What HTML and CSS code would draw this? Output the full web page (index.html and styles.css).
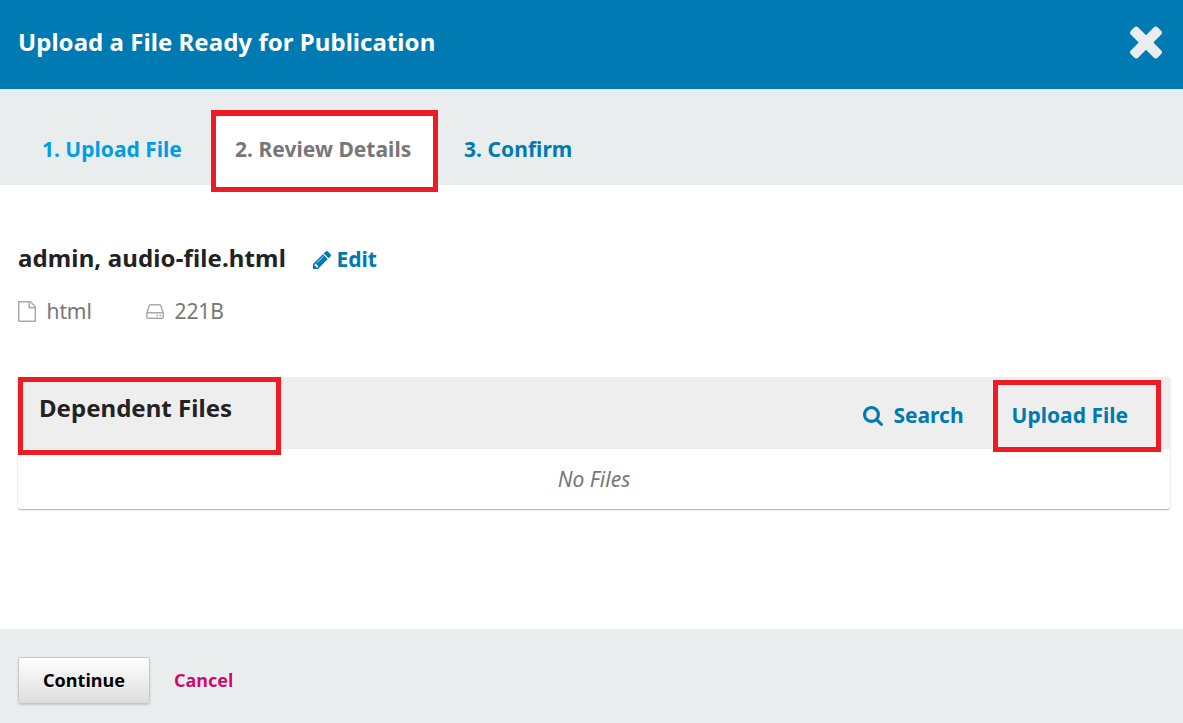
FILE: index.html
```
<!DOCTYPE html>
<html lang="en">
<head>
<meta charset="utf-8">
<title>Upload a File Ready for Publication</title>
<link rel="stylesheet" href="styles.css">
</head>
<body>
<div class="modal">
  <header class="header">
    <h1 class="title">Upload a File Ready for Publication</h1>
    <svg class="close" viewBox="110 366 1188 1188"><path d="M1298 1322q0 40-28 68l-136 136q-28 28-68 28t-68-28l-294-294-294 294q-28 28-68 28t-68-28l-136-136q-28-28-28-68t28-68l294-294-294-294q-28-28-28-68t28-68l136-136q28-28 68-28t68 28l294 294 294-294q28-28 68-28t68 28l136 136q28 28 28 68t-28 68l-294 294 294 294q28 28 28 68z"/></svg>
  </header>
  <nav class="tabs">
    <a class="tab tab-done">1. Upload File</a>
    <a class="tab tab-active">2. Review Details<span class="mark mark-tab"></span></a>
    <a class="tab tab-next">3. Confirm</a>
  </nav>
  <main class="content">
    <div class="file-row">
      <h2 class="file-name">admin, audio-file.html</h2>
      <a class="edit"><svg class="pencil" viewBox="128 149 1515 1515"><path d="M491 1536l91-91-235-235-91 91v107h128v128h107zm523-928q0-22-22-22-10 0-17 7l-542 542q-7 7-7 17 0 22 22 22 10 0 17-7l542-542q7-7 7-17zm-54-192l416 416-832 832h-416v-416zm683 96q0 53-37 90l-166 166-416-416 166-165q36-38 90-38 53 0 91 38l235 234q37 39 37 91z"/></svg>Edit</a>
    </div>
    <div class="meta">
      <span class="meta-type"><svg class="doc" viewBox="128 0 1536 1792"><path d="M1596 380q28 28 48 76t20 88v1152q0 40-28 68t-68 28h-1344q-40 0-68-28t-28-68v-1600q0-40 28-68t68-28h896q40 0 88 20t76 48zm-444-244v376h376q-10-29-22-41l-313-313q-12-12-41-22zm384 1528v-1024h-416q-40 0-68-28t-28-68v-416h-768v1536h1280z"/></svg>html</span>
      <span class="meta-size"><svg class="drive" viewBox="0 0 18 15"><path d="M.8 9.2 3.1 1.9Q3.4.8 4.5.8h9q1.1 0 1.4 1.1l2.3 7.3v4q0 1-1 1H1.8q-1 0-1-1zM.8 8.8h16.4" fill="none" stroke="currentColor" stroke-width="1.5"/><circle cx="11.3" cy="11.5" r=".9"/><circle cx="14.3" cy="11.5" r=".9"/></svg>221B</span>
    </div>
    <section class="panel">
      <div class="panel-head">
        <h3 class="panel-title">Dependent Files</h3>
        <a class="search"><svg class="lens" viewBox="64 128 1664 1664"><path d="M1216 832q0-185-131.5-316.5t-316.5-131.5-316.5 131.5-131.5 316.5 131.5 316.5 316.5 131.5 316.5-131.5 131.5-316.5zm512 832q0 52-38 90t-90 38q-54 0-90-38l-343-342q-179 124-399 124-143 0-273.5-55.5t-225-150-150-225-55.5-273.5 55.5-273.5 150-225 225-150 273.5-55.5 273.5 55.5 225 150 150 225 55.5 273.5q0 220-124 399l343 343q37 37 37 90z"/></svg><span class="search-label">Search</span></a>
        <a class="upload">Upload File</a>
        <span class="mark mark-title"></span>
        <span class="mark mark-upload"></span>
      </div>
      <p class="empty">No Files</p>
    </section>
  </main>
  <footer class="footer">
    <button class="continue">Continue</button>
    <a class="cancel">Cancel</a>
  </footer>
</div>
</body>
</html>
```
FILE: styles.css
```
* { box-sizing: border-box; }
body { margin: 0; background: #fff; font-family: "Noto Sans", sans-serif; }
h1, h2, h3, p { margin: 0; }
svg { fill: currentColor; flex: none; }
.modal { display: flex; flex-direction: column; height: 723px; }
.header { display: flex; justify-content: space-between; height: 89px; padding: 24px 21px 0 18px; background: #007ab2; }
.title { font-size: 24px; line-height: 36px; letter-spacing: .045px; color: #fff; white-space: nowrap; }
.close { width: 32px; height: 33px; margin-top: 2px; color: #e9eded; }
.tabs { display: flex; height: 96px; padding: 25px 0 0 18px; background: #e9eded; font-size: 21px; font-weight: 700; line-height: 70px; white-space: nowrap; }
.tab { height: 71px; }
.tab-done { width: 195px; padding-left: 24px; color: #009de5; }
.tab-active { position: relative; width: 224px; padding-left: 22px; background: #fff; border-top: 2px solid #007ab2; line-height: 66px; letter-spacing: .03px; color: #777; }
.tab-next { padding-left: 27px; letter-spacing: .05px; color: #007ab2; }
.mark { position: absolute; border: 5px solid #ed1c24; }
.mark-tab { left: -2px; top: -6px; width: 227px; height: 82px; }
.content { flex: 1; padding: 55px 13px 0 18px; }
.file-row { display: flex; align-items: center; height: 38px; white-space: nowrap; }
.file-name { width: 295px; padding-bottom: 3px; font-size: 24px; letter-spacing: .13px; color: #222; }
.edit { display: flex; align-items: center; gap: 5.5px; font-size: 21px; font-weight: 700; color: #007ab2; }
.pencil { width: 18px; height: 18px; margin-top: 1px; }
.meta { display: flex; height: 30px; margin-top: 18px; font-size: 21px; line-height: 30px; letter-spacing: -.1px; color: #777; }
.meta span { display: flex; align-items: center; gap: 10.5px; }
.meta-type { width: 128px; }
.doc { width: 18px; height: 21px; color: #aaa; }
.drive { width: 18px; height: 15px; color: #aaa; }
.panel { height: 132px; margin-top: 51px; border-radius: 3px; box-shadow: 0 1px 1px rgba(0,0,0,.2), 0 1px 2px rgba(0,0,0,.15); }
.panel-head { position: relative; display: flex; height: 72px; padding: 0 42px 0 21px; background: #eee; border-radius: 3px 3px 0 0; white-space: nowrap; }
.panel-title { flex: 1; font-size: 24px; line-height: 62px; letter-spacing: .03px; color: #222; }
.search { display: flex; align-items: center; gap: 10px; margin: 5px 48px 0 0; }
.search, .upload { font-size: 21px; font-weight: 700; color: #007ab2; }
.search-label { padding-bottom: 2px; }
.lens { width: 20px; height: 20px; }
.upload { line-height: 77px; }
.mark-title { left: 0; top: 0; width: 263px; height: 78px; }
.mark-upload { right: 9px; top: 3px; width: 168px; height: 72px; }
.empty { font-size: 21px; font-style: italic; line-height: 60px; text-align: center; color: #777; }
.footer { display: flex; align-items: center; gap: 24px; height: 94px; padding: 8px 18px 0; background: #e9eded; }
.continue { width: 132px; height: 47px; margin: 0; padding: 0; border: 1px solid #c8c8c8; border-radius: 3px; background: linear-gradient(#fff, #ddd); box-shadow: 0 1px 2px rgba(0,0,0,.15); font: 700 18px/44px "Noto Sans", sans-serif; color: #000; text-shadow: 0 1px 1px #fff; }
.cancel { font-size: 18px; font-weight: 700; color: #d00a6c; text-shadow: 0 1px 1px #fff; }
```
